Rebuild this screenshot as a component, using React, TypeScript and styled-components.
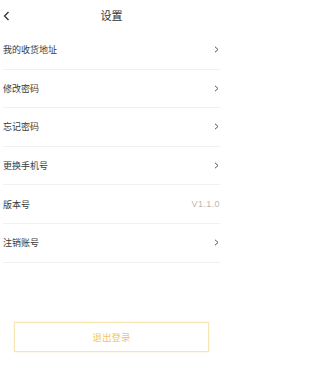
import React from 'react';
import styled, { createGlobalStyle } from 'styled-components';

const GlobalStyle = createGlobalStyle`
  html, body {
    margin: 0;
    padding: 0;
    background: #fff;
  }
  body {
    font-family: "Noto Sans CJK SC", "Noto Sans", sans-serif;
  }
`;

const Page = styled.div`
  width: 235px;
  height: 390px;
  box-sizing: border-box;
  padding: 0 15px 0 3px;
  background: #fff;
  display: flex;
  flex-direction: column;
`;

const Header = styled.div`
  height: 31px;
  display: flex;
  align-items: center;
  justify-content: center;
  position: relative;
`;

const BackButton = styled.div`
  position: absolute;
  left: 0;
  top: 10px;
  width: 8px;
  height: 12px;
  display: flex;
  align-items: center;
`;

const Title = styled.h1`
  margin: 0;
  font-size: 11px;
  font-weight: 400;
  color: #333;
  line-height: 31px;
`;

const List = styled.div`
  display: flex;
  flex-direction: column;
`;

const Row = styled.div`
  height: 38.6px;
  display: flex;
  align-items: center;
  justify-content: space-between;
  border-bottom: 1px solid #f1f1f1;
  box-sizing: border-box;
`;

const Label = styled.span`
  font-size: 9px;
  color: #3a3a3a;
`;

const Value = styled.span`
  font-size: 9px;
  color: #b8b8b8;
  font-family: "Liberation Sans", Arial, sans-serif;
  letter-spacing: 0.4px;
`;

const ChevronWrap = styled.span`
  display: flex;
  margin-right: 1px;
`;

const Footer = styled.div`
  flex: 1;
  display: flex;
  align-items: flex-start;
  justify-content: center;
  padding-top: 59px;
`;

const LogoutButton = styled.button`
  width: 195px;
  height: 30px;
  background: #fff;
  border: 1px solid #f7e6b4;
  box-shadow: 0 0 2px rgba(240, 210, 130, 0.35);
  color: #f0c667;
  font-size: 9.5px;
  font-family: "Noto Sans CJK SC", sans-serif;
  display: flex;
  align-items: center;
  justify-content: center;
`;

const Chevron: React.FC = () => (
  <ChevronWrap>
    <svg width="5" height="7" viewBox="0 0 5 7">
      <path d="M1 0.8 L4 3.5 L1 6.2" fill="none" stroke="#555" strokeWidth="1" />
    </svg>
  </ChevronWrap>
);

const items: { label: string; value?: string }[] = [
  { label: '我的收货地址' },
  { label: '修改密码' },
  { label: '忘记密码' },
  { label: '更换手机号' },
  { label: '版本号', value: 'V1.1.0' },
  { label: '注销账号' },
];

const App: React.FC = () => (
  <>
    <GlobalStyle />
    <Page>
      <Header>
        <BackButton>
          <svg width="7" height="10" viewBox="0 0 7 10">
            <path d="M5.5 1 L1.5 5 L5.5 9" fill="none" stroke="#333" strokeWidth="1.3" />
          </svg>
        </BackButton>
        <Title>设置</Title>
      </Header>
      <List>
        {items.map((item) => (
          <Row key={item.label}>
            <Label>{item.label}</Label>
            {item.value ? <Value>{item.value}</Value> : <Chevron />}
          </Row>
        ))}
      </List>
      <Footer>
        <LogoutButton>退出登录</LogoutButton>
      </Footer>
    </Page>
  </>
);

export default App;
